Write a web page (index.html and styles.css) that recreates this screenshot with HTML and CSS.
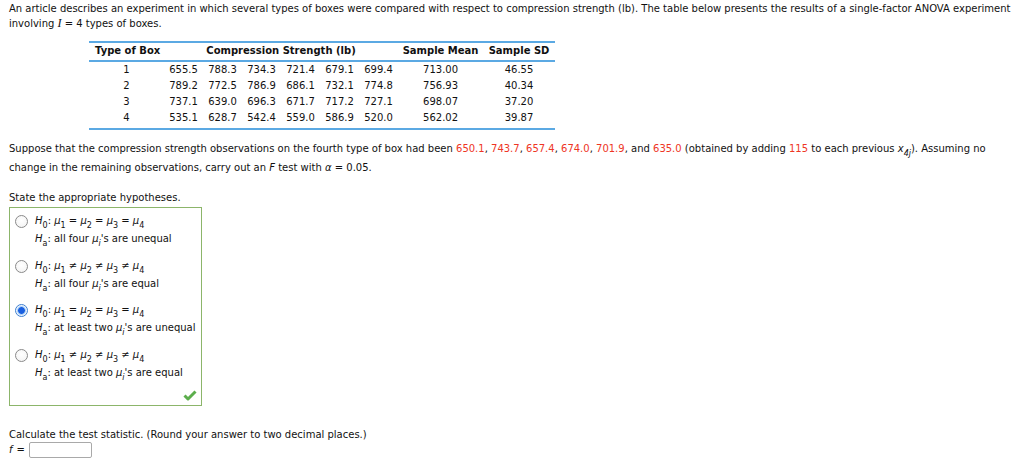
FILE: index.html
```html
<!DOCTYPE html>
<html>
<head>
<meta charset="utf-8">
<link rel="stylesheet" href="styles.css">
</head>
<body>
<div class="page">
  <p class="intro">An article describes an experiment in which several types of boxes were compared with respect to compression strength (lb). The table below presents the results of a single-factor ANOVA experiment involving <i class="serif">I</i> = 4 types of boxes.</p>

  <table class="data">
    <colgroup>
      <col class="w-type">
      <col class="w-val"><col class="w-val"><col class="w-val"><col class="w-val"><col class="w-val"><col class="w-val">
      <col class="w-mean">
      <col class="w-sd">
    </colgroup>
    <thead>
      <tr>
        <th class="c-type">Type of Box</th>
        <th colspan="6">Compression Strength (lb)</th>
        <th>Sample Mean</th>
        <th>Sample SD</th>
      </tr>
    </thead>
    <tbody>
      <tr><td>1</td><td>655.5</td><td>788.3</td><td>734.3</td><td>721.4</td><td>679.1</td><td>699.4</td><td>713.00</td><td>46.55</td></tr>
      <tr><td>2</td><td>789.2</td><td>772.5</td><td>786.9</td><td>686.1</td><td>732.1</td><td>774.8</td><td>756.93</td><td>40.34</td></tr>
      <tr><td>3</td><td>737.1</td><td>639.0</td><td>696.3</td><td>671.7</td><td>717.2</td><td>727.1</td><td>698.07</td><td>37.20</td></tr>
      <tr class="last"><td>4</td><td>535.1</td><td>628.7</td><td>542.4</td><td>559.0</td><td>586.9</td><td>520.0</td><td>562.02</td><td>39.87</td></tr>
    </tbody>
  </table>

  <p class="suppose">Suppose that the compression strength observations on the fourth type of box had been <span class="red">650.1</span>, <span class="red">743.7</span>, <span class="red">657.4</span>, <span class="red">674.0</span>, <span class="red">701.9</span>, and <span class="red">635.0</span> (obtained by adding <span class="red">115</span> to each previous <i>x</i><sub><i>4j</i></sub>). Assuming no change in the remaining observations, carry out an <i>F</i> test with <i>α</i> = 0.05.</p>

  <p class="state">State the appropriate hypotheses.</p>

  <div class="choices">
    <div class="option">
      <span class="radio"></span>
      <div class="lines">
        <div><i>H</i><sub>0</sub>: <i>μ</i><sub>1</sub> = <i>μ</i><sub>2</sub> = <i>μ</i><sub>3</sub> = <i>μ</i><sub>4</sub></div>
        <div><i>H</i><sub>a</sub>: all four <i>μ</i><sub><i>i</i></sub>'s are unequal</div>
      </div>
    </div>
    <div class="option">
      <span class="radio"></span>
      <div class="lines">
        <div><i>H</i><sub>0</sub>: <i>μ</i><sub>1</sub> ≠ <i>μ</i><sub>2</sub> ≠ <i>μ</i><sub>3</sub> ≠ <i>μ</i><sub>4</sub></div>
        <div><i>H</i><sub>a</sub>: all four <i>μ</i><sub><i>i</i></sub>'s are equal</div>
      </div>
    </div>
    <div class="option">
      <span class="radio on"></span>
      <div class="lines">
        <div><i>H</i><sub>0</sub>: <i>μ</i><sub>1</sub> = <i>μ</i><sub>2</sub> = <i>μ</i><sub>3</sub> = <i>μ</i><sub>4</sub></div>
        <div><i>H</i><sub>a</sub>: at least two <i>μ</i><sub><i>i</i></sub>'s are unequal</div>
      </div>
    </div>
    <div class="option">
      <span class="radio"></span>
      <div class="lines">
        <div><i>H</i><sub>0</sub>: <i>μ</i><sub>1</sub> ≠ <i>μ</i><sub>2</sub> ≠ <i>μ</i><sub>3</sub> ≠ <i>μ</i><sub>4</sub></div>
        <div><i>H</i><sub>a</sub>: at least two <i>μ</i><sub><i>i</i></sub>'s are equal</div>
      </div>
    </div>
    <div class="check-row">
      <svg class="check" width="14" height="11" viewBox="0 0 14 11"><path d="M1.5 5.5 L5 9 L12.5 1.5" fill="none" stroke="#5cae4c" stroke-width="3" stroke-linejoin="round"/></svg>
    </div>
  </div>

  <p class="calc">Calculate the test statistic. (Round your answer to two decimal places.)</p>
  <div class="answer"><i>f</i> = <span class="input"></span></div>
</div>
</body>
</html>
```

FILE: styles.css
```css
html, body {
  margin: 0;
  padding: 0;
  background: #fff;
}
body {
  font-family: "DejaVu Sans", Verdana, sans-serif;
  font-size: 10px;
  color: #111;
}
.page {
  padding: 1px 9px 0 9px;
}
p { margin: 0; }
.intro { line-height: 15px; }
.serif { font-family: "Liberation Serif", serif; font-size: 12px; }
sub {
  font-size: 8px;
  vertical-align: -4px;
  line-height: 0;
}
.data {
  margin: 10px 0 0 80px;
  border-collapse: collapse;
  table-layout: fixed;
  width: 466px;
  border-top: 2px solid #5ba9e3;
  border-bottom: 2px solid #5ba9e3;
  white-space: nowrap;
}
.w-type { width: 75px; }
.w-val { width: 39px; }
.w-mean { width: 85px; }
.w-sd { width: 72px; }
.data th {
  font-weight: bold;
  height: 17px;
  line-height: 16px;
  padding: 0;
  vertical-align: top;
  text-align: center;
  border-bottom: 2px solid #5ba9e3;
}
.data th.c-type {
  text-align: left;
  padding-left: 6px;
}
.data td {
  height: 16px;
  line-height: 16px;
  padding: 0;
  vertical-align: top;
  text-align: center;
}
.data tr.last td { height: 18px; }
.suppose {
  margin-top: 9px;
  line-height: 19px;
}
.red { color: #ee3524; }
.state {
  margin-top: 13px;
  line-height: 15px;
}
.choices {
  margin-top: 2px;
  width: 191px;
  border: 1px solid #8cb56a;
  padding: 4px 0 4px 0;
  white-space: nowrap;
}
.option {
  display: flex;
  align-items: flex-start;
  padding-left: 5px;
  margin-bottom: 8.5px;
}
.radio {
  width: 11px;
  height: 11px;
  border: 1px solid #8a8a8a;
  border-radius: 50%;
  margin: 3px 7px 0 0;
  flex: none;
  background: radial-gradient(circle at 50% 40%, #fff 0, #f1f1f1 100%);
}
.radio.on {
  border-color: #3d7fd1;
  background: radial-gradient(circle, #1a5fe0 0 3px, #7fb2f0 3.5px, #d7e8fb 4.5px, #fff 5.5px);
}
.lines > div {
  line-height: 18px;
  height: 18px;
}
.check-row {
  display: flex;
  justify-content: flex-end;
  align-items: flex-end;
  padding-right: 4px;
  margin-top: -3px;
  height: 14px;
}
.calc {
  margin-top: 21px;
  line-height: 15px;
}
.answer {
  display: flex;
  align-items: center;
  gap: 4px;
  line-height: 16px;
}
.input {
  display: inline-block;
  width: 61px;
  height: 14px;
  border: 1px solid #a9a9a9;
  border-radius: 2px;
  background: #fff;
}
```
